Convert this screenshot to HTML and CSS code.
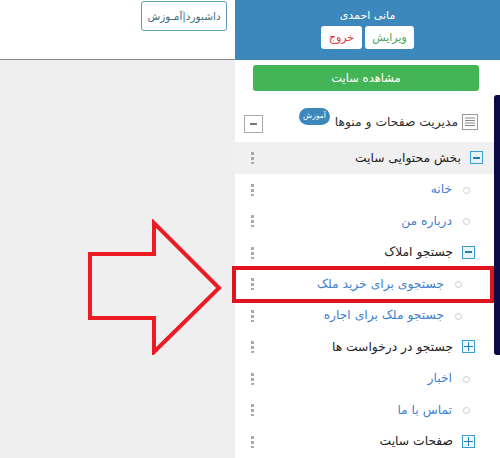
FILE: index.html
```html
<!DOCTYPE html>
<html lang="fa">
<head>
    <meta charset="UTF-8">
    <title>مدیریت صفحات و منوها</title>
    <link rel="stylesheet" href="styles.css">
</head>
<body>
    <div class="page">
        <div class="main">
            <div class="topbar">
                <a class="top-link">داشبورد|آمـوزش</a>
            </div>
            <div class="subbar"></div>
            <div class="canvas"></div>
        </div>

        <div class="sidebar">
            <div class="user-box">
                <div class="user-name">مانی احمدی</div>
                <div class="user-buttons">
                    <button class="user-button edit">ویرایش</button>
                    <button class="user-button logout">خروج</button>
                </div>
            </div>

            <button class="site-button">مشاهده سایت</button>

            <div class="menu-title">
                <svg class="title-icon" width="16" height="16" viewBox="0 0 16 16">
                    <rect x="0.5" y="0.5" width="15" height="15" fill="#fff" stroke="#999"/>
                    <path d="M3 4h10M3 6.5h10M3 9h10M3 11.5h10" stroke="#888" fill="none"/>
                </svg>
                <span class="title-text">مدیریت صفحات و منوها</span>
                <span class="badge">آموزش</span>
                <span class="collapse-all"></span>
            </div>

            <div class="row section level-0">
                <span class="box minus"></span>
                <span class="label dark">بخش محتوایی سایت</span>
                <span class="dots"></span>
            </div>
            <div class="row level-1">
                <span class="bullet"></span>
                <span class="label">خانه</span>
                <span class="dots"></span>
            </div>
            <div class="row level-1">
                <span class="bullet"></span>
                <span class="label">درباره من</span>
                <span class="dots"></span>
            </div>
            <div class="row level-1">
                <span class="box minus"></span>
                <span class="label dark">جستجو املاک</span>
                <span class="dots"></span>
            </div>
            <div class="row level-2">
                <span class="bullet"></span>
                <span class="label">جستجوی برای خرید ملک</span>
                <span class="dots"></span>
            </div>
            <div class="row level-2">
                <span class="bullet"></span>
                <span class="label">جستجو ملک برای اجاره</span>
                <span class="dots"></span>
            </div>
            <div class="row level-1">
                <span class="box plus"></span>
                <span class="label dark">جستجو در درخواست ها</span>
                <span class="dots"></span>
            </div>
            <div class="row level-1">
                <span class="bullet"></span>
                <span class="label">اخبار</span>
                <span class="dots"></span>
            </div>
            <div class="row level-1">
                <span class="bullet"></span>
                <span class="label">تماس با ما</span>
                <span class="dots"></span>
            </div>
            <div class="row level-1">
                <span class="box plus"></span>
                <span class="label dark">صفحات سایت</span>
                <span class="dots"></span>
            </div>

            <div class="scroll-thumb"></div>
        </div>

        <!-- annotation drawn on top of the screenshot -->
        <svg class="arrow" width="140" height="136" viewBox="0 0 140 136">
            <path d="M3 35H67V4L132 69 67 133V99H3Z" fill="none" stroke="#ed1c24" stroke-width="4"/>
        </svg>
        <div class="highlight"></div>
    </div>
</body>
</html>
```

FILE: styles.css
```css
html, body {
    margin: 0;
    padding: 0;
}
body {
    font-family: "DejaVu Sans", sans-serif;
    color: #333;
    overflow: hidden;
}
.page {
    position: relative;
    display: flex;
    width: 500px;
    height: 458px;
    overflow: hidden;
}
.main {
    width: 235px;
    display: flex;
    flex-direction: column;
    background-color: #efefef;
}
.topbar {
    height: 33px;
    box-sizing: border-box;
    display: flex;
    justify-content: flex-end;
    padding: 1px 8px 0 0;
    background-color: #fff;
    box-shadow: 0 1px 4px rgba(0, 0, 0, 0.2);
}
.top-link {
    width: 86px;
    height: 30px;
    box-sizing: border-box;
    border: 1px solid #5f9fb8;
    border-radius: 3px;
    background-color: #fff;
    color: #3d6f86;
    font-size: 10.5px;
    line-height: 28px;
    text-align: center;
    direction: rtl;
}
.subbar {
    height: 26px;
    background-color: #fff;
    border-bottom: 1px solid #8a8a8a;
}
.canvas {
    flex: 1;
}
.sidebar {
    position: relative;
    width: 265px;
    direction: rtl;
    background-color: #fff;
}
.user-box {
    height: 60px;
    box-sizing: border-box;
    padding-top: 8px;
    background-color: #3c87bb;
    text-align: center;
}
.user-name {
    color: #fff;
    font-size: 11px;
    line-height: 15px;
}
.user-buttons {
    display: flex;
    justify-content: center;
    gap: 3px;
    margin-top: 3px;
}
.user-button {
    height: 23px;
    border: none;
    border-radius: 3px;
    background-color: #fff;
    font-family: inherit;
    font-size: 11px;
    padding: 0;
}
.user-button.edit {
    width: 49px;
    color: #3fa652;
}
.user-button.logout {
    width: 41px;
    color: #e0333c;
}
.site-button {
    display: block;
    width: 226px;
    height: 26px;
    margin: 5px 21px 0 18px;
    border: none;
    border-radius: 3px;
    background-color: #44b556;
    color: #fff;
    font-family: inherit;
    font-size: 11.5px;
}
.menu-title {
    position: relative;
    height: 50px;
    box-sizing: border-box;
    display: flex;
    align-items: center;
    padding: 10px 22px 0 0;
    margin-top: 1px;
}
.title-text {
    margin-right: 4px;
    font-size: 12.3px;
    color: #333;
}
.badge {
    position: absolute;
    right: 170px;
    top: 16px;
    width: 31px;
    height: 17px;
    border-radius: 9px;
    background-color: #3c87bb;
    color: #fff;
    font-size: 7.5px;
    line-height: 16px;
    text-align: center;
}
.collapse-all {
    position: absolute;
    left: 9px;
    top: 23px;
    width: 17px;
    height: 16px;
    border: 1px solid #aaa;
    background: linear-gradient(#777, #777) center / 7px 2px no-repeat #fff;
}
.row {
    display: flex;
    align-items: center;
    height: 31.5px;
    box-sizing: border-box;
}
.section {
    background-color: #f0f0f0;
}
.level-0 {
    padding-right: 17px;
}
.level-1 {
    padding-right: 25px;
}
.level-2 {
    padding-right: 33px;
}
.label {
    margin-right: 9px;
    color: #3f7fd0;
    font-size: 12.3px;
    white-space: nowrap;
}
.label.dark {
    color: #222;
}
.bullet {
    width: 5px;
    height: 5px;
    margin: 2px 5px 0 2px;
    flex: none;
    border: 1px solid #ccc;
    border-radius: 50%;
}
.box {
    width: 11px;
    height: 11px;
    flex: none;
    border: 1px solid #3a9fd0;
    background-color: #e9f2f8;
}
.box.minus {
    background: linear-gradient(#1d7fb8, #1d7fb8) center / 7px 2px no-repeat #e9f2f8;
}
.box.plus {
    background:
        linear-gradient(#1d7fb8, #1d7fb8) center / 9px 1px no-repeat,
        linear-gradient(#1d7fb8, #1d7fb8) center / 1px 9px no-repeat,
        #f4f9fc;
}
.dots {
    margin-right: auto;
    margin-left: 16px;
    width: 3px;
    height: 13px;
    flex: none;
    background: radial-gradient(circle, #aaa 1.5px, transparent 1.6px) center top / 3px 5px repeat-y;
}
.scroll-thumb {
    position: absolute;
    right: 0;
    top: 95px;
    width: 6px;
    height: 260px;
    border-radius: 3px 0 0 3px;
    background-color: #0a0a45;
}
.arrow {
    position: absolute;
    left: 87px;
    top: 219px;
}
.highlight {
    position: absolute;
    left: 232px;
    top: 266px;
    width: 262px;
    height: 37px;
    box-sizing: border-box;
    border: 4px solid #e0141e;
}
```
